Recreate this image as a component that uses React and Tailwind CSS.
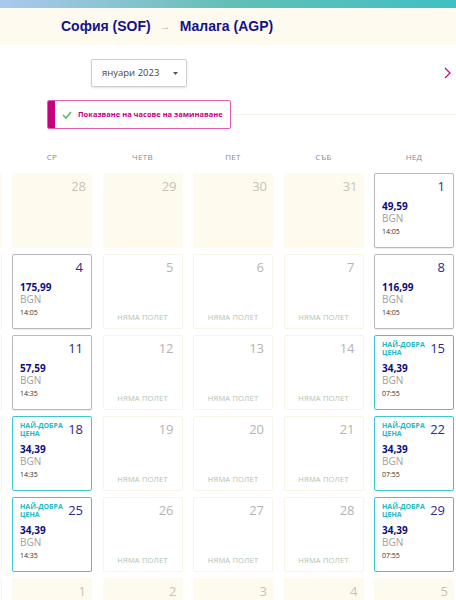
import React from 'react'

const DAYS = ['ПОН', 'ВТ', 'СР', 'ЧЕТВ', 'ПЕТ', 'СЪБ', 'НЕД']

// flights keyed by January day
const FLIGHTS = {
  1: { price: '49,59', time: '14:05' },
  4: { price: '175,99', time: '14:05' },
  8: { price: '116,99', time: '14:05' },
  11: { price: '57,59', time: '14:35' },
  15: { price: '34,39', time: '07:55', best: true },
  18: { price: '34,39', time: '14:35', best: true },
  22: { price: '34,39', time: '07:55', best: true },
  25: { price: '34,39', time: '14:35', best: true },
  29: { price: '34,39', time: '07:55', best: true },
}

function buildCells() {
  const cells = []
  for (let d = 26; d <= 31; d++) cells.push({ day: d, out: true })
  for (let d = 1; d <= 31; d++) cells.push({ day: d, flight: FLIGHTS[d] })
  for (let d = 1; d <= 5; d++) cells.push({ day: d, out: true })
  // Mon/Tue are scrolled out of view: keep their boxes, drop their text
  return cells.map((c, i) => ({ ...c, hidden: i % 7 < 2 }))
}

function Cell({ cell }) {
  if (cell.out) {
    return (
      <div className="h-[75px] bg-[#fffaee] pt-[5px] pr-[6px] text-right text-[13px] leading-[16px] text-[#c4c4ba]">
        {!cell.hidden && cell.day}
      </div>
    )
  }

  if (!cell.flight) {
    return (
      <div className="h-[75px] bg-white border border-[#f8f5e8] rounded-[2px] flex flex-col justify-between pt-[4px] pb-[6px] pr-[8px]">
        <div className="text-right text-[13px] leading-[16px] text-[#b4b4b4]">{!cell.hidden && cell.day}</div>
        <div className="text-center pl-[8px] text-[7.5px] leading-[10px] text-[#b0c3b0] tracking-[0.2px]">
          {!cell.hidden && 'НЯМА ПОЛЕТ'}
        </div>
      </div>
    )
  }

  const f = cell.flight
  return (
    <div
      className={`h-[75px] bg-white rounded-[2px] pt-[4px] pl-[7px] pr-[8px] ${
        f.best
          ? 'border-[1.5px] border-[#3cc9cd]'
          : 'border border-[#b9b9b9] shadow-[0_1px_1px_rgba(0,0,0,0.08)]'
      }`}
    >
      <div className="h-[16px] flex justify-between items-start">
        {f.best ? (
          <div className="mt-[1px] text-[7px] leading-[8px] font-bold text-[#22b9c3]">
            НАЙ-ДОБРА
            <br />
            ЦЕНА
          </div>
        ) : (
          <span />
        )}
        <span className="text-[13px] leading-[16px] text-[#2a2a8c]">{cell.day}</span>
      </div>
      <div className="mt-[6px] text-[10px] leading-[12px] font-bold text-[#0d0d7c]">{f.price}</div>
      <div className="text-[10px] leading-[12px] text-[#a0a0a0]">BGN</div>
      <div className="mt-[3px] text-[7px] leading-[10px] text-[#333]">{f.time}</div>
    </div>
  )
}

export default function App() {
  const cells = buildCells()

  return (
    <div className="w-[456px] h-[600px] overflow-hidden bg-white font-['Open_Sans',sans-serif]">
      {/* top banner strip */}
      <div className="h-2 bg-gradient-to-r from-[#aac8ee] via-[#62bfb6] to-[#3ec0c3]" />

      {/* route header */}
      <div className="h-[37px] bg-[#fffaef] flex items-center pl-[61px] gap-[9px] font-['Liberation_Sans',Arial,sans-serif] font-bold text-[14px] text-[#12128a]">
        <span>София (SOF)</span>
        <span className="font-normal text-[11px] text-[#b6b6c6]">→</span>
        <span>Малага (AGP)</span>
      </div>

      {/* month select */}
      <div className="mt-[14px] flex items-center justify-between pl-[91px] pr-[5px]">
        <div className="w-[96px] h-[28px] border border-[#cfcfcf] rounded-[2px] shadow-[0_1px_2px_rgba(0,0,0,0.12)] flex items-center justify-between pl-[10px] pr-[8px]">
          <span className="text-[9.5px] text-[#444]">януари 2023</span>
          <svg width="5" height="3" viewBox="0 0 5 3">
            <path d="M0 0h5L2.5 3z" fill="#555" />
          </svg>
        </div>
        <svg width="7" height="12" viewBox="0 0 7 12">
          <path d="M1 1l5 5-5 5" fill="none" stroke="#c6007e" strokeWidth="1.2" />
        </svg>
      </div>

      {/* departure times toggle */}
      <div className="mt-[13px] flex items-center">
        <div className="ml-[47px] w-[184px] h-[29px] flex border border-[#e05cae] rounded-[2px] overflow-hidden">
          <div className="w-[7px] bg-[#c6007e]" />
          <div className="flex items-center gap-[6px] pl-[7px]">
            <svg width="10" height="8" viewBox="0 0 10 8">
              <path d="M1 4l3 3 5-6" fill="none" stroke="#5cb85c" strokeWidth="1.6" />
            </svg>
            <span className="text-[7.5px] font-bold text-[#c6007e] whitespace-nowrap">
              Показване на часове на заминаване
            </span>
          </div>
        </div>
        <div className="flex-1 h-px bg-[#f7f3e4]" />
      </div>

      {/* calendar, scrolled so Wednesday is the first full column */}
      <div className="mt-[20px] ml-[-169px]">
        <div className="grid grid-cols-[repeat(7,80px)] gap-x-[10.5px] h-[16px] items-center">
          {DAYS.map((d, i) => (
            <div key={d} className="text-center text-[8px] text-[#8a8a8a] tracking-[0.3px]">
              {i >= 2 && d}
            </div>
          ))}
        </div>
        <div className="mt-[8px] grid grid-cols-[repeat(7,80px)] gap-x-[10.5px] gap-y-[6px]">
          {cells.map((c, i) => (
            <Cell key={i} cell={c} />
          ))}
        </div>
      </div>
    </div>
  )
}
